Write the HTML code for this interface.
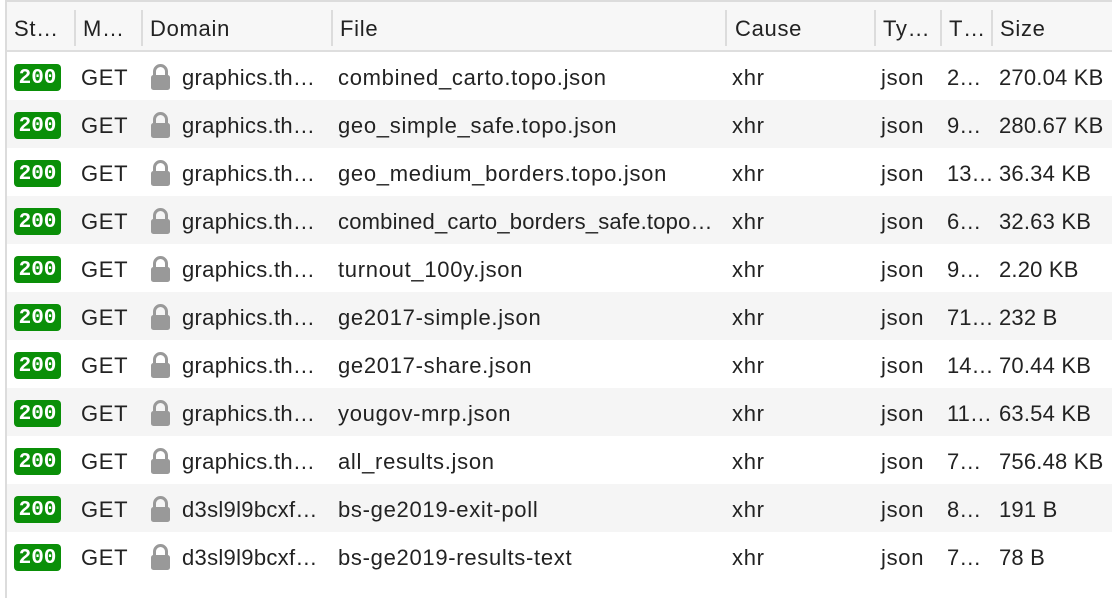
<!DOCTYPE html>
<html><head><meta charset="utf-8"><style>
*{margin:0;padding:0;box-sizing:border-box}
body{width:1112px;height:598px;background:#fff;overflow:hidden;font-family:"Liberation Sans",sans-serif;color:#222;font-size:22px;letter-spacing:0.7px;position:relative}
.frame{position:absolute;left:5px;top:0;width:1107px;height:598px;border-left:2px solid #dcdcdc;border-top:2px solid #dcdcdc}
.hdr{position:absolute;left:7px;top:2px;width:1105px;height:50px;background:#f7f7f7;border-bottom:2px solid #dedede}
.sep{position:absolute;top:8px;width:2px;height:36px;background:#dcdcdc}
.t{position:absolute;white-space:nowrap}
.row{position:absolute;left:7px;width:1105px;height:48px}
.row.g{background:#f5f5f5}
.badge{position:absolute;left:7px;top:12px;width:47px;height:27px;background:#0a8f08;border-radius:4px;color:#fff;font-family:"Liberation Mono",monospace;font-weight:bold;font-size:21px;letter-spacing:0;text-align:center;line-height:29px}
.lock{position:absolute;left:143px;top:12px}
.row .t{top:13px}
</style></head><body>
<div class="frame"></div>
<div class="hdr">
<span class="t" style="left:7px;top:14px">St…</span>
<div class="sep" style="left:67px"></div>
<span class="t" style="left:76px;top:14px">M…</span>
<div class="sep" style="left:134px"></div>
<span class="t" style="left:143px;top:14px">Domain</span>
<div class="sep" style="left:324px"></div>
<span class="t" style="left:333px;top:14px">File</span>
<div class="sep" style="left:718px"></div>
<span class="t" style="left:728px;top:14px">Cause</span>
<div class="sep" style="left:867px"></div>
<span class="t" style="left:876px;top:14px">Ty…</span>
<div class="sep" style="left:933px"></div>
<span class="t" style="left:942px;top:14px">T…</span>
<div class="sep" style="left:984px"></div>
<span class="t" style="left:993px;top:14px">Size</span>
</div>
<div id="rows"></div>
<script>
var d=[["graphics.th…","combined_carto.topo.json","2…","270.04 KB"],["graphics.th…","geo_simple_safe.topo.json","9…","280.67 KB"],["graphics.th…","geo_medium_borders.topo.json","13…","36.34 KB"],["graphics.th…","combined_carto_borders_safe.topo…","6…","32.63 KB"],["graphics.th…","turnout_100y.json","9…","2.20 KB"],["graphics.th…","ge2017-simple.json","71…","232 B"],["graphics.th…","ge2017-share.json","14…","70.44 KB"],["graphics.th…","yougov-mrp.json","11…","63.54 KB"],["graphics.th…","all_results.json","7…","756.48 KB"],["d3sl9l9bcxf…","bs-ge2019-exit-poll","8…","191 B"],["d3sl9l9bcxf…","bs-ge2019-results-text","7…","78 B"]];
var h="";
d.forEach(function(r,i){h+='<div class="row'+(i%2?' g':'')+'" style="top:'+(52+i*48)+'px"><div class="badge">200</div><span class="t" style="left:74px">GET</span><svg class="lock" width="21" height="27" viewBox="0 0 21 27"><path d="M4.5 11V7.5a6 6 0 0 1 12 0V11" fill="none" stroke="#999" stroke-width="3"/><rect x="1" y="11" width="19" height="15" rx="2.5" fill="#999"/></svg><span class="t" style="left:175px;letter-spacing:0.3px">'+r[0]+'</span><span class="t" style="left:331px;'+(i==3?'letter-spacing:0.2px':'')+'">'+r[1]+'</span><span class="t" style="left:725px">xhr</span><span class="t" style="left:874px">json</span><span class="t" style="left:940px;letter-spacing:0">'+r[2]+'</span><span class="t" style="left:992px;letter-spacing:0.2px">'+r[3]+'</span></div>';});
document.getElementById("rows").innerHTML=h;
</script>
</body></html>
